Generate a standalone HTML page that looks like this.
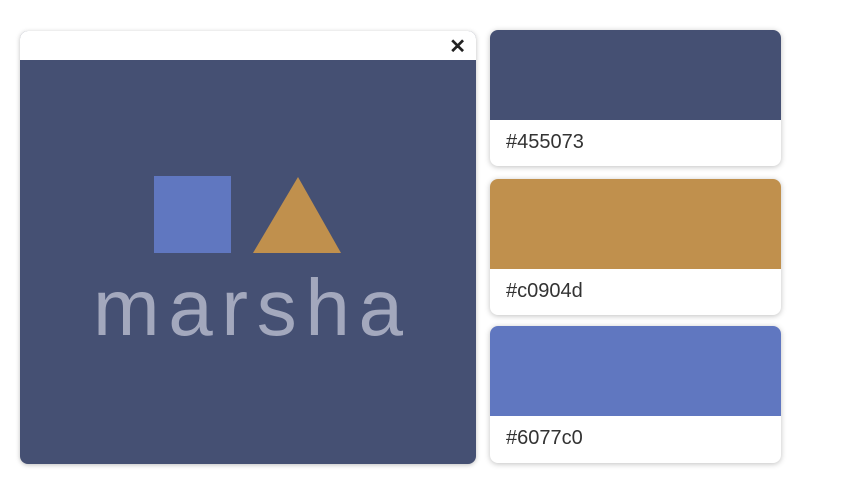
<!DOCTYPE html>
<html><head><style>
body{margin:0;width:854px;height:494px;background:#fff;position:relative;overflow:hidden;font-family:"Liberation Sans",sans-serif}
.main{position:absolute;left:20px;top:31px;width:456px;height:433px;border-radius:8px;background:#455073;box-shadow:0 1px 5px rgba(0,0,0,.25);overflow:hidden}
.hdr{height:29px;background:#fff;position:relative}
.x{position:absolute;right:10px;top:3px;font-size:20px;font-weight:bold;color:#222}
.card{position:absolute;left:490px;width:291px;border-radius:8px;background:#fff;box-shadow:0 1px 6px rgba(0,0,0,.25);overflow:hidden}
.sw{height:90px}
.lbl{font-size:20px;color:#333;padding:11px 0 0 16px}
</style></head><body>
<div class="main"><div class="hdr"><span class="x">✕</span></div>
<svg width="456" height="404" style="position:absolute;left:0;top:29px">
<rect x="134" y="116" width="77" height="77" fill="#6077c0"/>
<polygon points="278,117 321,193 233,193" fill="#c0904d"/>
<text x="73" y="275" font-family="Liberation Sans" font-size="80" fill="#a3a8bd" textLength="310" lengthAdjust="spacing">marsha</text>
</svg></div>
<div class="card" style="top:30px;height:136px"><div class="sw" style="background:#455073"></div><div class="lbl">#455073</div></div>
<div class="card" style="top:179px;height:136px"><div class="sw" style="background:#c0904d"></div><div class="lbl">#c0904d</div></div>
<div class="card" style="top:326px;height:137px"><div class="sw" style="background:#6077c0"></div><div class="lbl">#6077c0</div></div>
</body></html>
